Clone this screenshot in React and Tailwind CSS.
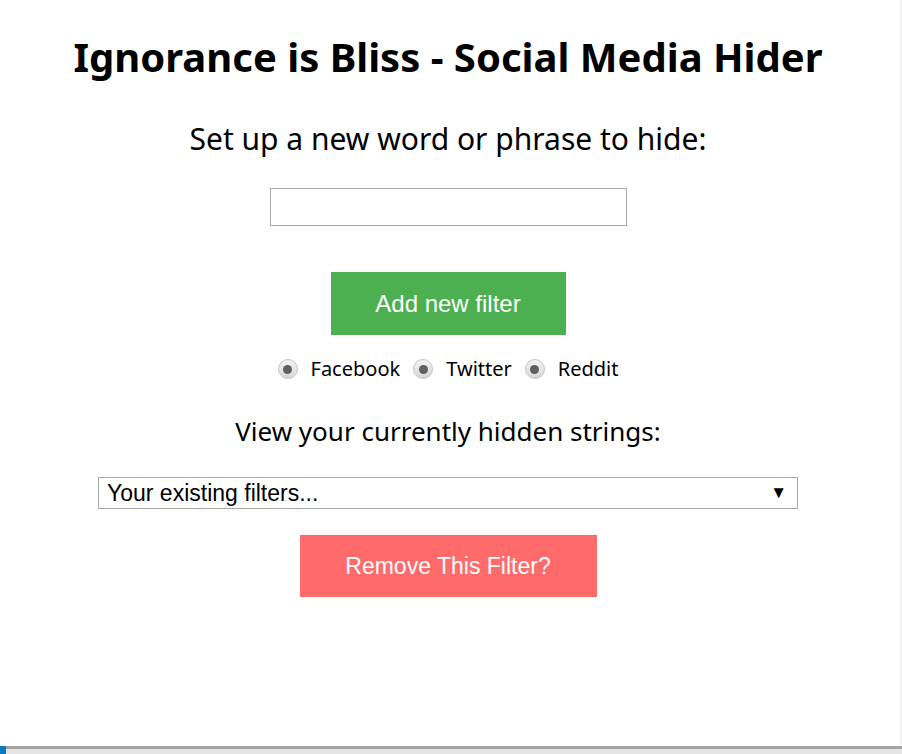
import { useState } from "react";

function Radio({ label }) {
  return (
    <label className="flex items-center">
      <span className="flex h-[20px] w-[20px] items-center justify-center rounded-full border border-[#c4c4c4] bg-gradient-to-b from-[#f4f4f4] to-[#d6d6d6]">
        <span className="h-[9px] w-[9px] rounded-full bg-[#5f5f5f]" />
      </span>
      <span className="ml-[13px] text-[20px] text-black">{label}</span>
    </label>
  );
}

export default function App() {
  const [phrase, setPhrase] = useState("");

  return (
    <div className="relative flex h-[754px] w-[902px] flex-col overflow-hidden bg-white font-['Noto_Sans',sans-serif]">
      <main className="flex flex-1 flex-col items-center border-r-2 border-[#f2f2f2] pr-[4px]">
        <h1 className="mt-[28px] text-[40px] font-bold leading-[58px] text-black">
          Ignorance is Bliss - Social Media Hider
        </h1>
        <h2 className="mt-[32px] text-[30px] leading-[42px] text-black">Set up a new word or phrase to hide:</h2>
        <input
          className="mt-[28px] h-[38px] w-[357px] border border-[#a9a9a9] px-2 text-[20px] outline-none"
          onChange={(e) => setPhrase(e.target.value)}
          type="text"
          value={phrase}
        />
        <button
          className="mt-[46px] h-[63px] w-[235px] bg-[#4caf50] font-['Liberation_Sans',Arial,sans-serif] text-[24px] text-white"
          type="button"
        >
          Add new filter
        </button>
        <div className="mt-[19px] flex items-center gap-[13px]">
          <Radio label="Facebook" />
          <Radio label="Twitter" />
          <Radio label="Reddit" />
        </div>
        <h3 className="mt-[28px] text-[26px] leading-[38px] text-black">View your currently hidden strings:</h3>
        <div className="mt-[27px] flex h-[32px] w-[700px] items-center justify-between border border-[#a9a9a9] pl-[8px] pr-[10px] font-['Liberation_Sans',Arial,sans-serif] text-[23px] text-black">
          <span>Your existing filters...</span>
          <span className="text-[17px]">▼</span>
        </div>
        <button
          className="mt-[26px] h-[62px] w-[297px] bg-[#ff6b6b] font-['Liberation_Sans',Arial,sans-serif] text-[23px] text-white"
          type="button"
        >
          Remove This Filter?
        </button>
      </main>
      <div className="flex h-[8px] border-t-[3px] border-[#a3a3a3] bg-[#e4e4e4]">
        <span className="-mt-[3px] h-[11px] w-[6px] bg-[#0a78c2]" />
      </div>
    </div>
  );
}
